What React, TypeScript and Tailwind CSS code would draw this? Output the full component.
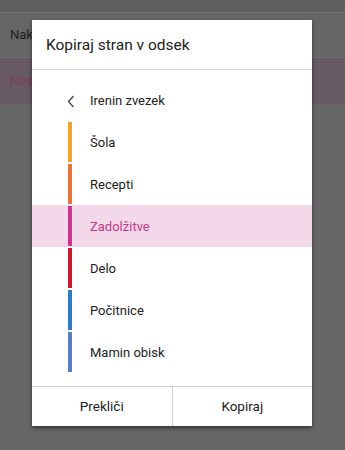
import React from "react";

interface Section {
  name: string;
  color: string;
  selected?: boolean;
}

const sections: Section[] = [
  { name: "Šola", color: "bg-[#f2a431]" },
  { name: "Recepti", color: "bg-[#e8743c]" },
  { name: "Zadolžitve", color: "bg-[#c9388c]", selected: true },
  { name: "Delo", color: "bg-[#c8192e]" },
  { name: "Počitnice", color: "bg-[#2c7cc3]" },
  { name: "Mamin obisk", color: "bg-[#5a7ec4]" },
];

export default function App() {
  return (
    <div className="relative h-[450px] w-[345px] overflow-hidden bg-[#666666] font-['Roboto','Liberation_Sans',sans-serif]">
      {/* dimmed page behind the dialog */}
      <div className="h-[12px] bg-[#5f5f5f]" />
      <div className="h-[1px] bg-[#777777]" />
      <div className="flex h-[45px] items-center border-b border-[#6e6e6e] pl-[10px] text-[13px] text-[#1f1f1f]">
        <span className="w-[22px] overflow-hidden whitespace-nowrap">Nakupovalni seznam</span>
      </div>
      <div className="flex h-[46px] items-center bg-[#675a62] pl-[10px] text-[13px] text-[#7d3a5e]">
        <span className="w-[22px] overflow-hidden whitespace-nowrap">Nesortirani zapiski</span>
      </div>

      {/* dialog */}
      <div className="absolute left-[32px] top-[20px] flex h-[406px] w-[280px] flex-col bg-white shadow-[0_2px_4px_rgba(0,0,0,0.5)]">
        <div className="flex h-[50px] items-center border-b border-[#dcdcdc] pl-[14px] pt-[3px] text-[15.5px] text-[#222222]">
          Kopiraj stran v odsek
        </div>
        <div className="flex-1 pt-[10px]">
          <div className="flex h-[41px] items-center pt-[1px] text-[13px] text-[#222222]">
            <svg
              width="8"
              height="13"
              viewBox="0 0 8 13"
              className="ml-[35px] mr-[15px]"
            >
              <path d="M6.5 1 L1.5 6.5 L6.5 12" fill="none" stroke="#444" strokeWidth="1.3" />
            </svg>
            Irenin zvezek
          </div>
          {sections.map((s) => (
            <div
              key={s.name}
              className={
                s.selected
                  ? "flex h-[42px] items-stretch bg-[#f2d8e8] text-[13px] text-[#c9388c]"
                  : "flex h-[42px] items-stretch text-[13px] text-[#222222]"
              }
            >
              <div className={`ml-[36px] my-[1px] w-[4px] ${s.color}`} />
              <div className="flex items-center pl-[18px] pt-[1px]">{s.name}</div>
            </div>
          ))}
        </div>
        <div className="flex h-[40px] border-t border-[#cfcfcf] text-[13.5px] text-[#222222]">
          <button className="flex flex-1 items-center justify-center border-r border-[#cfcfcf]">
            Prekliči
          </button>
          <button className="flex flex-1 items-center justify-center">Kopiraj</button>
        </div>
      </div>
    </div>
  );
}
